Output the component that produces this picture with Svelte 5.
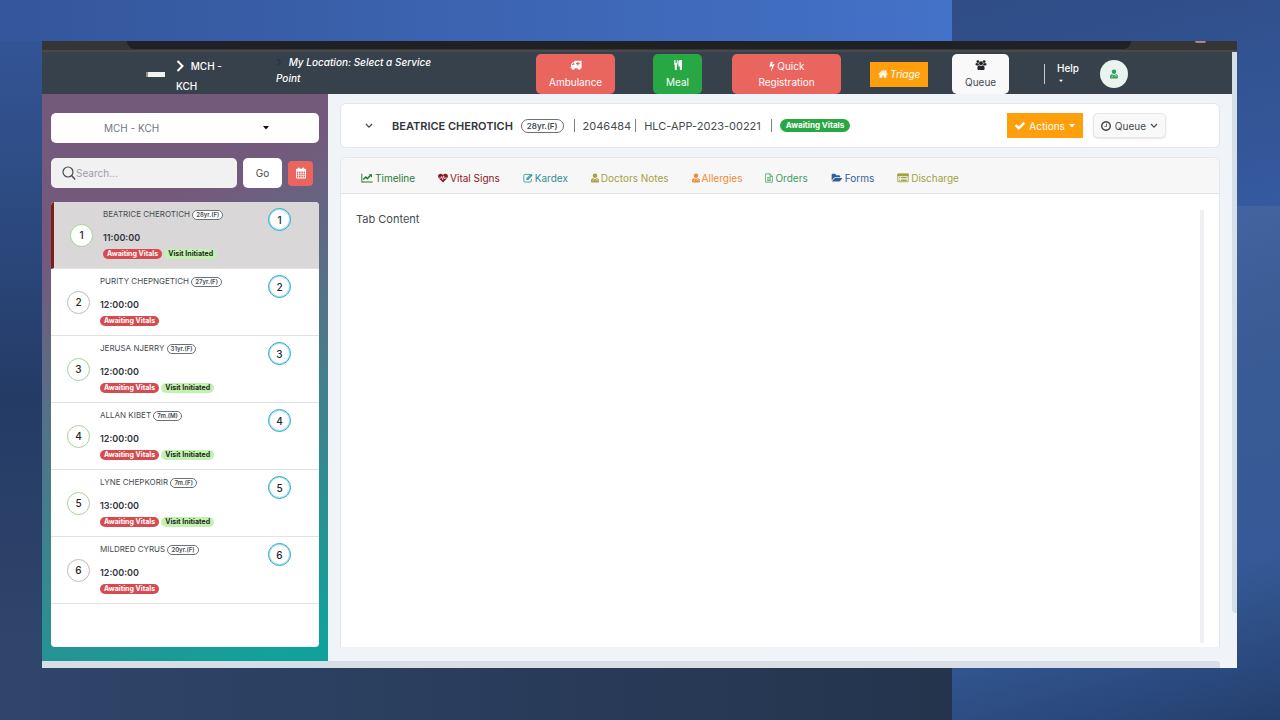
<script lang="ts">
	type Patient = {
		name: string;
		age: string;
		time: string;
		initiated: boolean;
	};

	const patients: Patient[] = [
		{ name: 'BEATRICE CHEROTICH', age: '28yr.(F)', time: '11:00:00', initiated: true },
		{ name: 'PURITY CHEPNGETICH', age: '27yr.(F)', time: '12:00:00', initiated: false },
		{ name: 'JERUSA NJERRY', age: '31yr.(F)', time: '12:00:00', initiated: true },
		{ name: 'ALLAN KIBET', age: '7m.(M)', time: '12:00:00', initiated: true },
		{ name: 'LYNE CHEPKORIR', age: '7m.(F)', time: '13:00:00', initiated: true },
		{ name: 'MILDRED CYRUS', age: '20yr.(F)', time: '12:00:00', initiated: false }
	];

	const tabs = [
		{ label: 'Timeline', icon: 'chart', tone: 'green' },
		{ label: 'Vital Signs', icon: 'heart', tone: 'maroon' },
		{ label: 'Kardex', icon: 'edit', tone: 'teal' },
		{ label: 'Doctors Notes', icon: 'doctor', tone: 'olive' },
		{ label: 'Allergies', icon: 'doctor', tone: 'orange' },
		{ label: 'Orders', icon: 'file', tone: 'leaf' },
		{ label: 'Forms', icon: 'folder', tone: 'blue' },
		{ label: 'Discharge', icon: 'list', tone: 'olive' }
	];

	let selected = $state(0);
	let search = $state('');
</script>

{#snippet icon(name: string)}
	{#if name === 'chart'}
		<svg class="icon wide" viewBox="0 0 18 16" aria-hidden="true">
			<path d="M0 1h1.5v12.5H18V15H0z" />
			<path d="M3 10.5 7 6.5l2.5 2.5L14 4.5" fill="none" stroke="currentColor" stroke-width="2.4" />
			<path d="M11.5 2H17v5.5z" />
		</svg>
	{:else if name === 'heart'}
		<svg class="icon" viewBox="0 0 16 16" aria-hidden="true">
			<path d="M8 15 1.3 8.4C-.4 6.300-.2 3.700 1.200 2.300 3.200.400 6.200.800 8 3.200 9.800.800 12.800.400 14.800 2.300c1.400 1.400 1.600 4-.1 6.100z" />
			<path d="M1 8h4l1-2.500 1.500 5L9 4.500l1.300 4.700.9-1.200H15" fill="none" stroke="#f7f7f7" stroke-width="1.100" />
		</svg>
	{:else if name === 'edit'}
		<svg class="icon" viewBox="0 0 16 16" aria-hidden="true">
			<path d="M11 2.200H3.200C2 2.200 1.200 3 1.200 4.200v8.300c0 1.200.8 2 2 2h8.300c1.200 0 2-.8 2-2V9.500" fill="none" stroke="currentColor" stroke-width="1.300" />
			<path d="M5.500 8.300 12.800 1l2.700 2.700L8.200 11H5.500z" />
			<path d="m7.500 8.800 5-5" stroke="#f7f7f7" stroke-width=".8" />
		</svg>
	{:else if name === 'doctor'}
		<svg class="icon slim" viewBox="0 0 14 16" aria-hidden="true">
			<path d="M7 0a4 4 0 0 1 2.900 6.700c-.7.900-1.700 1.500-2.900 1.500S4.800 7.600 4.100 6.700A4 4 0 0 1 7 0z" />
			<path d="M3.500 7.800C1.200 8.500 0 10 0 13v.700C0 15.200 1 16 2.400 16h9.200c1.400 0 2.400-.8 2.400-2.300V13c0-3-1.200-4.500-3.500-5.200L7 10.200z" />
			<path d="M3.800 8.500v3.700M10.300 8.500V11M8.500 13.500v-1a1.800 1.800 0 0 1 3.600 0v1" fill="none" stroke="#fff" stroke-opacity=".8" stroke-width=".9" />
			<circle cx="3.800" cy="12.900" r="1" fill="#fff" fill-opacity=".8" />
		</svg>
	{:else if name === 'file'}
		<svg class="icon slim" viewBox="0 0 14 16" aria-hidden="true">
			<path d="M.7.700h8L13.300 5.300v10H.7zM8.700.700v4.600h4.600M3.500 7.500h7M3.500 10h7M3.500 12.500h7" fill="none" stroke="currentColor" stroke-width="1.300" />
		</svg>
	{:else if name === 'folder'}
		<svg class="icon wide" viewBox="0 0 1920 1792" aria-hidden="true">
			<path d="M1879 952q0 31-31 66l-336 396q-43 51-120.500 86.500t-143.500 35.500h-1088q-34 0-60.500-13t-26.500-43q0-31 31-66l336-396q43-51 120.500-86.500t143.500-35.500h1088q34 0 60.500 13t26.500 43zm-343-344v160h-832q-94 0-197 47.500t-164 119.500l-337 396-5 6q0-4-.5-12.500t-.5-12.500v-960q0-92 66-158t158-66h320q92 0 158 66t66 158v32h544q92 0 158 66t66 158z" />
		</svg>
	{:else if name === 'list'}
		<svg class="icon wide" viewBox="0 0 18 16" aria-hidden="true">
			<path d="M.7 1.500h16.600v12.500H.7z" fill="none" stroke="currentColor" stroke-width="1.400" />
			<path d="M0 1h18v4H0zM3 6.500h1.500V8H3zM6 6.500h9V8H6zM3 9h1.500v1.300H3zM6 9h9v1.300H6zM3 11.300h1.500v1.300H3zM6 11.300h9v1.300H6z" />
		</svg>
	{:else if name === 'ambulance'}
		<svg class="icon wide" viewBox="0 0 18 16" aria-hidden="true">
			<path fill-rule="evenodd" d="M7 1h10.300c.4 0 .7.300.7.700v10.600c0 .4-.3.700-.7.700h-.8a2.500 2.500 0 0 1-5 0H7a2.500 2.500 0 0 1-5 0H0v-1.200h1V7.500c0-.4.200-.9.500-1.200L3.700 4c.3-.3.800-.5 1.200-.5H6.300V1.700c0-.4.300-.7.700-.7zM2.300 7.800h4V4.800H5L2.300 7.500zM11 2.800v2H9v2h2v2h2v-2h2v-2h-2v-2z" />
		</svg>
	{:else if name === 'meal'}
		<svg class="icon" viewBox="0 0 1792 1792" aria-hidden="true">
			<path d="M832 64v640q0 61-35.500 111t-92.500 70v779q0 52-38 90t-90 38h-128q-52 0-90-38t-38-90v-779q-57-20-92.500-70t-35.500-111v-640q0-26 19-45t45-19 45 19 19 45v416q0 26 19 45t45 19 45-19 19-45v-416q0-26 19-45t45-19 45 19 19 45v416q0 26 19 45t45 19 45-19 19-45v-416q0-26 19-45t45-19 45 19 19 45zm768 0v1600q0 52-38 90t-90 38h-128q-52 0-90-38t-38-90v-512h-224q-13 0-22.500-9.500t-9.500-22.500v-800q0-132 94-226t226-94h256q26 0 45 19t19 45z" />
		</svg>
	{:else if name === 'bolt'}
		<svg class="icon bolt" viewBox="448 0 896 1792" aria-hidden="true">
			<path d="M1333 566q18 20 7 44l-540 1157q-13 25-42 25-4 0-14-2-17-5-25.500-19t-4.500-30l197-808-406 101q-4 1-12 1-18 0-31-11-18-15-13-39l201-825q4-14 16-23t28-9h328q19 0 32 12.500t13 29.500q0 8-5 18l-171 463 396-98q8-2 12-2 19 0 34 15z" />
		</svg>
	{:else if name === 'home'}
		<svg class="icon" viewBox="64 128 1664 1536" aria-hidden="true">
			<path d="M1472 992v480q0 26-19 45t-45 19h-384v-384h-256v384h-384q-26 0-45-19t-19-45v-480q0-1 .5-3t.5-3l575-474 575 474q1 2 1 6zm223-69l-62 74q-8 9-21 11h-3q-13 0-21-7l-692-577-692 577q-12 8-24 7-13-2-21-11l-62-74q-8-10-7-23.500t11-21.500l719-599q32-26 76-26t76 26l244 204v-195q0-14 9-23t23-9h192q14 0 23 9t9 23v408l219 182q10 8 11 21.500t-7 23.500z" />
		</svg>
	{:else if name === 'users'}
		<svg class="icon wide" viewBox="0 0 18 16" aria-hidden="true">
			<circle cx="4" cy="2.500" r="2.300" />
			<circle cx="14" cy="2.500" r="2.300" />
			<circle cx="9" cy="5" r="3.200" />
			<path d="M5 5.300C3.500 4.800 2 5 1 4.600.3 5.500 0 7 .3 8c.3.600 1 .700 2 .700h2c.5-.6 1-1 1.600-1.200A4 4 0 0 1 5 5.300zM13 5.300c1.500-.5 3-.3 4-.7.700.900 1 2.400.7 3.400-.3.600-1 .700-2 .700h-2c-.5-.6-1-1-1.600-1.200.500-.6.800-1.400.900-2.200zM6 8.500c2 1.300 4 1.300 6 0 2 .5 2.800 2.500 2.800 5 0 1.500-1 2.500-2.500 2.500H5.700c-1.500 0-2.500-1-2.500-2.500 0-2.500.8-4.500 2.800-5z" />
		</svg>
	{:else if name === 'check'}
		<svg class="icon" viewBox="121 256 1550 1380" aria-hidden="true">
			<path d="M1671 566q0 40-28 68l-724 724-136 136q-28 28-68 28t-68-28l-136-136-362-362q-28-28-28-68t28-68l136-136q28-28 68-28t68 28l294 295 656-657q28-28 68-28t68 28l136 136q28 28 28 68z" />
		</svg>
	{:else if name === 'clock'}
		<svg class="icon" viewBox="128 128 1536 1536" aria-hidden="true">
			<path d="M1024 544v448q0 14-9 23t-23 9h-320q-14 0-23-9t-9-23v-64q0-14 9-23t23-9h224v-352q0-14 9-23t23-9h64q14 0 23 9t9 23zm416 352q0-148-73-273t-198-198-273-73-273 73-198 198-73 273 73 273 198 198 273 73 273-73 198-198 73-273zm224 0q0 209-103 385.500t-279.500 279.500-385.500 103-385.500-103-279.500-279.500-103-385.500 103-385.500 279.500-279.500 385.500-103 385.500 103 279.500 279.500 103 385.500z" />
		</svg>
	{:else if name === 'calendar'}
		<svg class="icon tall" viewBox="0 0 16 18" aria-hidden="true">
			<path fill-rule="evenodd" d="M1.200 2.200H3V1.500a1.500 1.500 0 0 1 3 0v.700h4v-.7a1.500 1.500 0 0 1 3 0v.700h1.800c.7 0 1.200.600 1.200 1.200v13c0 .6-.5 1.200-1.200 1.200H1.200C.5 17.600 0 17 0 16.400v-13c0-.6.500-1.200 1.200-1.200zM1.500 6.500v2.800h2.300V6.500zm3.400 0v2.800h2.500V6.500zm3.600 0v2.800H11V6.500zm3.700 0v2.800h2.300V6.500zM1.500 10.300v2.500h2.300v-2.500zm3.400 0v2.500h2.500v-2.500zm3.600 0v2.500H11v-2.500zm3.700 0v2.500h2.300v-2.500zM1.500 13.800v2.400h2.300v-2.400zm3.400 0v2.400h2.500v-2.400zm3.600 0v2.400H11v-2.400zm3.700 0v2.400h2.300v-2.400z" />
		</svg>
	{:else if name === 'search'}
		<svg class="icon lens" viewBox="0 0 14 14" aria-hidden="true">
			<circle cx="6" cy="6" r="5" fill="none" stroke="currentColor" stroke-width="1.200" />
			<path d="m9.600 9.600 3.600 3.800" stroke="currentColor" stroke-width="1.400" />
		</svg>
	{:else if name === 'caret'}
		<svg class="caret" viewBox="0 0 6 4" aria-hidden="true"><path d="M0 0h6L3 3.500z" /></svg>
	{:else if name === 'down'}
		<svg class="down" viewBox="0 0 8 6" aria-hidden="true">
			<path d="m1 1 3 3.200L7 1" fill="none" stroke="currentColor" stroke-width="1.200" />
		</svg>
	{/if}
{/snippet}

<div class="desktop">
	<div class="window">
		<div class="browser"><span class="omnibox"></span><span class="profile"></span></div>

		<div class="viewport">
			<div class="page">
				<header class="topbar">
					<span class="logo"></span>
					<a class="site" href="#home">
						<svg class="angle" viewBox="0 0 8 12" aria-hidden="true">
							<path d="m1.500 1 5 5-5 5" fill="none" stroke="currentColor" stroke-width="2" />
						</svg>
						MCH - KCH
					</a>
					<a class="location" href="#location">
						<svg class="angle faint" viewBox="0 0 8 12" aria-hidden="true">
							<path d="m2 2 4 4-4 4" fill="none" stroke="currentColor" />
						</svg>
						My Location: Select a Service Point
					</a>
					<button type="button" class="btn stacked red">{@render icon('ambulance')}<span>Ambulance</span></button>
					<button type="button" class="btn stacked success">{@render icon('meal')}<span>Meal</span></button>
					<button type="button" class="btn quick red">{@render icon('bolt')} Quick Registration</button>
					<button type="button" class="btn square triage">{@render icon('home')}<em>Triage</em></button>
					<button type="button" class="btn stacked light">{@render icon('users')}<span>Queue</span></button>
					<button type="button" class="help"><span>Help</span>{@render icon('caret')}</button>
					<button type="button" class="avatar" aria-label="Account">{@render icon('doctor')}</button>
				</header>

				<div class="body">
					<aside class="sidebar">
						<div class="select">
							<select aria-label="Clinic">
								<option>MCH - KCH</option>
							</select>
							{@render icon('caret')}
						</div>

						<form class="search" onsubmit={(e) => e.preventDefault()}>
							<label class="field">
								{@render icon('search')}
								<input type="text" placeholder="Search..." aria-label="Search" bind:value={search} />
							</label>
							<button type="submit" class="go">Go</button>
							<button type="button" class="date" aria-label="Pick a date">{@render icon('calendar')}</button>
						</form>

						<ul class="patients">
							{#each patients as patient, i}
								<li>
									<button type="button" class="patient" class:active={selected === i} onclick={() => (selected = i)}>
										<span class="number" class:ready={patient.initiated}>{i + 1}</span>
										<span class="details">
											<span class="name">{patient.name} <span class="age">{patient.age}</span></span>
											<span class="time">{patient.time}</span>
											<span class="badges">
												<span class="badge waiting">Awaiting Vitals</span>
												{#if patient.initiated}
													<span class="badge initiated">Visit Initiated</span>
												{/if}
											</span>
										</span>
										<span class="number queue">{i + 1}</span>
									</button>
								</li>
							{/each}
						</ul>
					</aside>

					<main class="main">
						<section class="card summary">
							<button type="button" class="toggle" aria-label="Toggle details">{@render icon('down')}</button>
							<h1>BEATRICE CHEROTICH</h1>
							<span class="pill">28yr.(F)</span>
							<span class="rule"></span>
							<span class="id">2046484</span>
							<span class="rule tight"></span>
							<span class="id">HLC-APP-2023-00221</span>
							<span class="rule"></span>
							<span class="status">Awaiting Vitals</span>
							<div class="actions">
								<button type="button" class="btn square">{@render icon('check')} Actions {@render icon('caret')}</button>
								<button type="button" class="btn outline">{@render icon('clock')} Queue {@render icon('down')}</button>
							</div>
						</section>

						<section class="card record">
							<div class="tabs" role="tablist">
								{#each tabs as tab}
									<button type="button" role="tab" class={tab.tone}>{@render icon(tab.icon)}{tab.label}</button>
								{/each}
							</div>
							<div class="content">
								<p>Tab Content</p>
								<span class="track"></span>
							</div>
						</section>
					</main>
				</div>
			</div>
			<div class="vscroll"><span></span></div>
		</div>
		<div class="hscroll"><span></span></div>
	</div>
</div>

<style>
	:global(body) {
		margin: 0;
	}

	.desktop,
	.desktop * {
		box-sizing: border-box;
	}

	.desktop {
		min-height: 100vh;
		display: flex;
		padding: 41px 43px 52px 42px;
		font-family: Inter, 'Liberation Sans', sans-serif;
		font-size: 10px;
		color: #454b50;
		background:
			linear-gradient(165deg, #2f4c85, #355a9f) 100% 0 / 328px 206px no-repeat,
			linear-gradient(165deg, #4768a3 0%, #3a5b94 35%, #355a97 72%, #243f6d 100%) 100% 100% / 328px calc(100% - 206px) no-repeat,
			linear-gradient(90deg, #2f456a, #24344d) 0 100% / 952px 52px no-repeat,
			linear-gradient(90deg, #34569a, #4472c8) 0 0 / 952px 41px no-repeat,
			linear-gradient(180deg, #34569a 0%, #2e4c84 25%, #243b66 55%, #2f456a 90%);
	}

	button {
		font: inherit;
		color: inherit;
		padding: 0;
		border: 0;
		background: none;
		cursor: pointer;
	}

	.window {
		flex: 1;
		min-width: 0;
		display: flex;
		flex-direction: column;
		background: #f0f4f9;
	}

	.browser {
		height: 11px;
		display: flex;
		padding: 0 31px 0 85px;
		background: #353535;
		border-bottom: 2px solid #48494b;
	}

	.omnibox {
		flex: 1;
		height: 8px;
		border-radius: 0 0 10px 10px;
		background: #202124;
	}

	.profile {
		width: 11px;
		height: 2px;
		margin-left: 64px;
		border-radius: 0 0 5px 5px;
		background: #b98378;
	}

	.viewport {
		flex: 1;
		display: flex;
	}

	.page {
		flex: 1;
		min-width: 0;
		display: flex;
		flex-direction: column;
	}

	.icon {
		width: 10px;
		height: 10px;
		flex: none;
		fill: currentColor;
	}

	.wide {
		width: 12px;
	}

	.slim {
		width: 8px;
	}

	.bolt {
		width: 6px;
		vertical-align: -1px;
	}

	.tall {
		height: 12px;
	}

	.lens {
		width: 14px;
		height: 14px;
	}

	.caret {
		width: 6px;
		height: 4px;
		flex: none;
		fill: currentColor;
	}

	.down {
		width: 8px;
		height: 6px;
		flex: none;
	}

	.topbar {
		height: 42px;
		display: grid;
		grid-template-columns: 104fr 30fr 100fr 260fr 117fr 79fr 138fr 82fr 92fr 56fr 132fr;
		align-items: center;
		justify-items: start;
		padding-bottom: 1px;
		background: #37414b;
		color: #fff;
	}

	.logo {
		grid-column: 2;
		width: 19px;
		height: 5px;
		background: #f3f1ee;
		border-left: 2px solid #9a9088;
	}

	.site,
	.location {
		color: inherit;
		text-decoration: none;
		font-weight: 500;
	}

	.site {
		width: 52px;
		line-height: 20px;
		padding-top: 4px;
	}

	.location {
		width: 168px;
		line-height: 16px;
		font-style: italic;
		align-self: start;
		padding-top: 2px;
	}

	.angle {
		width: 8px;
		height: 12px;
		margin-right: 4px;
		vertical-align: -2px;
	}

	.faint {
		width: 6px;
		height: 10px;
		vertical-align: -1px;
		color: #1f262d;
	}

	.btn {
		display: flex;
		align-items: center;
		justify-content: center;
		gap: 4px;
		line-height: 16px;
		border-radius: 5px;
	}

	.stacked {
		height: 40px;
		flex-direction: column;
		padding: 0 13px;
	}

	.stacked .icon {
		margin: 2px 0 0;
	}

	.red {
		background: #eb655f;
	}

	.success {
		background: #28a745;
	}

	.light {
		background: #f9f9fa;
		color: #454b50;
	}

	.light .icon {
		color: #22262a;
	}

	.quick {
		display: block;
		width: 109px;
		height: 40px;
		padding: 0 24px;
	}

	.square {
		height: 25px;
		border-radius: 0;
		padding: 0 8px;
		color: #fff;
		background: #ff9f0e;
	}

	.triage {
		gap: 2px;
	}

	.help {
		display: flex;
		flex-direction: column;
		gap: 5px;
		height: 20px;
		padding-left: 12px;
		border-left: 1px solid #c5cad0;
		font-weight: 500;
		line-height: 8px;
		text-align: left;
	}

	.help .caret {
		width: 4px;
		margin: 2px;
	}

	.avatar {
		width: 28px;
		height: 28px;
		border-radius: 50%;
		background: #eaf4ee;
		color: #2f9e5b;
		line-height: 0;
	}

	.body {
		flex: 1;
		display: flex;
	}

	.sidebar {
		width: 286px;
		flex: none;
		display: flex;
		flex-direction: column;
		padding: 19px 9px 14px;
		background: linear-gradient(155deg, #735a7d 0%, #735a7d 24%, #467d8a 58%, #10a29a 96%);
	}

	.select {
		position: relative;
	}

	.select select {
		display: block;
		width: 100%;
		height: 30px;
		padding: 0 53px;
		appearance: none;
		border: 0;
		border-radius: 5px;
		background: #fff;
		font: inherit;
		color: #73787d;
	}

	.select .caret {
		position: absolute;
		top: 13px;
		right: 50px;
		color: #111;
	}

	.search {
		display: flex;
		align-items: center;
		gap: 6px;
		padding: 15px 6px 14px 0;
	}

	.field {
		flex: 1;
		min-width: 0;
		height: 30px;
		display: flex;
		align-items: center;
		padding-left: 11px;
		border-radius: 5px;
		background: #f1f1f2;
	}

	.field input {
		flex: 1;
		min-width: 0;
		padding: 0;
		border: 0;
		outline: 0;
		background: none;
		font: inherit;
		color: #454b50;
	}

	.field input::placeholder {
		color: #9b9fa5;
	}

	.go {
		width: 39px;
		height: 30px;
		border-radius: 5px;
		background: #fff;
	}

	.date {
		width: 25px;
		height: 25px;
		border-radius: 4px;
		background: #eb655f;
		color: #fff;
		line-height: 0;
	}

	.patients {
		flex: 1;
		margin: 0;
		padding: 0;
		list-style: none;
		border-radius: 4px;
		overflow: hidden;
		background: #fff;
	}

	.patient {
		width: 100%;
		height: 67px;
		display: flex;
		align-items: flex-start;
		gap: 10px;
		padding: 6px 28px 6px 16px;
		border-bottom: 1px solid #e0e2e4;
		text-align: left;
	}

	.active {
		border-left: 3px solid #7f1d16;
		background: #d9d7d8;
	}

	.number {
		width: 23px;
		height: 23px;
		flex: none;
		align-self: center;
		display: flex;
		align-items: center;
		justify-content: center;
		border: 1px solid #b9bbbd;
		border-radius: 50%;
		background: #fff;
		font-weight: 500;
		color: #22262a;
	}

	.ready {
		border-color: #a5d19a;
	}

	.queue {
		align-self: flex-start;
		border-color: #1fa9cc;
		box-shadow: inset 0 0 0 1px #1fa9cc60;
	}

	.details {
		flex: 1;
		display: flex;
		flex-direction: column;
	}

	.name {
		font-size: 8px;
		line-height: 12px;
		white-space: nowrap;
	}

	.age {
		display: inline-block;
		padding: 0 3px;
		border: 1px solid #6c7177;
		border-radius: 6px;
		background: #fff;
		font-size: 6px;
		font-weight: 600;
		line-height: 8px;
	}

	.time {
		margin-top: 11px;
		font-size: 9px;
		font-weight: 600;
		line-height: 14px;
		color: #2f353b;
	}

	.badges {
		display: flex;
		gap: 2px;
		padding-top: 4px;
	}

	.badge {
		padding: 0 4px;
		border-radius: 5px;
		font-size: 7px;
		font-weight: 700;
		line-height: 10px;
	}

	.waiting {
		background: #d64b4f;
		color: #fff;
	}

	.initiated {
		background: #c3f2b0;
		color: #1d2a1b;
	}

	.main {
		flex: 1;
		min-width: 0;
		display: flex;
		flex-direction: column;
		gap: 9px;
		padding: 9px 12px 14px;
	}

	.card {
		border: 1px solid #e3e6ea;
		border-radius: 6px;
		background: #fff;
	}

	.summary {
		height: 45px;
		display: flex;
		align-items: center;
		gap: 8px;
		padding: 0 53px 0 24px;
		font-size: 11px;
	}

	.toggle {
		width: 8px;
		height: 20px;
		line-height: 0;
	}

	.summary h1 {
		margin: 0 0 0 11px;
		font-size: 11px;
		font-weight: 600;
		color: #2f353b;
	}

	.pill {
		padding: 0 5px;
		border: 1px solid #6c7177;
		border-radius: 8px;
		font-size: 8px;
		font-weight: 600;
		line-height: 12px;
	}

	.rule {
		width: 1px;
		height: 13px;
		margin-left: 2px;
		background: #7b8187;
	}

	.tight {
		margin-left: -4px;
	}

	.status {
		padding: 0 6px;
		border-radius: 7px;
		background: #28a745;
		color: #fff;
		font-size: 8px;
		font-weight: 700;
		line-height: 13px;
	}

	.actions {
		display: flex;
		gap: 10px;
		margin-left: auto;
		font-size: 10px;
	}

	.outline {
		padding: 0 7px;
		border: 1px solid #e6e7e9;
		background: #f9f9fa;
		box-shadow: 0 1px 2px #0000001a;
	}

	.record {
		flex: 1;
		display: flex;
		flex-direction: column;
		border-bottom: 0;
		border-radius: 6px 6px 0 0;
	}

	.tabs {
		height: 36px;
		display: flex;
		align-items: center;
		gap: 23px;
		padding: 5px 20px 0;
		border-bottom: 1px solid #e0e2e4;
		border-radius: 6px 6px 0 0;
		background: #f7f7f7;
	}

	.tabs button {
		display: flex;
		align-items: center;
		gap: 2px;
		line-height: 14px;
		white-space: nowrap;
	}

	.green {
		color: #1f7a34;
	}

	.maroon {
		color: #8b1a24;
	}

	.teal {
		color: #2f8f93;
	}

	.olive {
		color: #a3a145;
	}

	.orange {
		color: #f28a35;
	}

	.leaf {
		color: #3d9c5c;
	}

	.blue {
		color: #2f5f9a;
	}

	.content {
		flex: 1;
		display: flex;
		justify-content: space-between;
		padding: 16px 15px 4px 15px;
	}

	.content p {
		margin: 0;
		font-size: 11px;
		line-height: 18px;
	}

	.track {
		width: 4px;
		background: #eef0f4;
	}

	.vscroll {
		width: 5px;
		padding-bottom: 48px;
	}

	.vscroll span {
		display: block;
		height: 100%;
		border-radius: 0 0 0 4px;
		background: #d6dee6;
	}

	.hscroll {
		height: 7px;
		padding-right: 17px;
	}

	.hscroll span {
		display: block;
		height: 100%;
		border-radius: 0 4px 0 0;
		background: #d7dee6;
	}
</style>
